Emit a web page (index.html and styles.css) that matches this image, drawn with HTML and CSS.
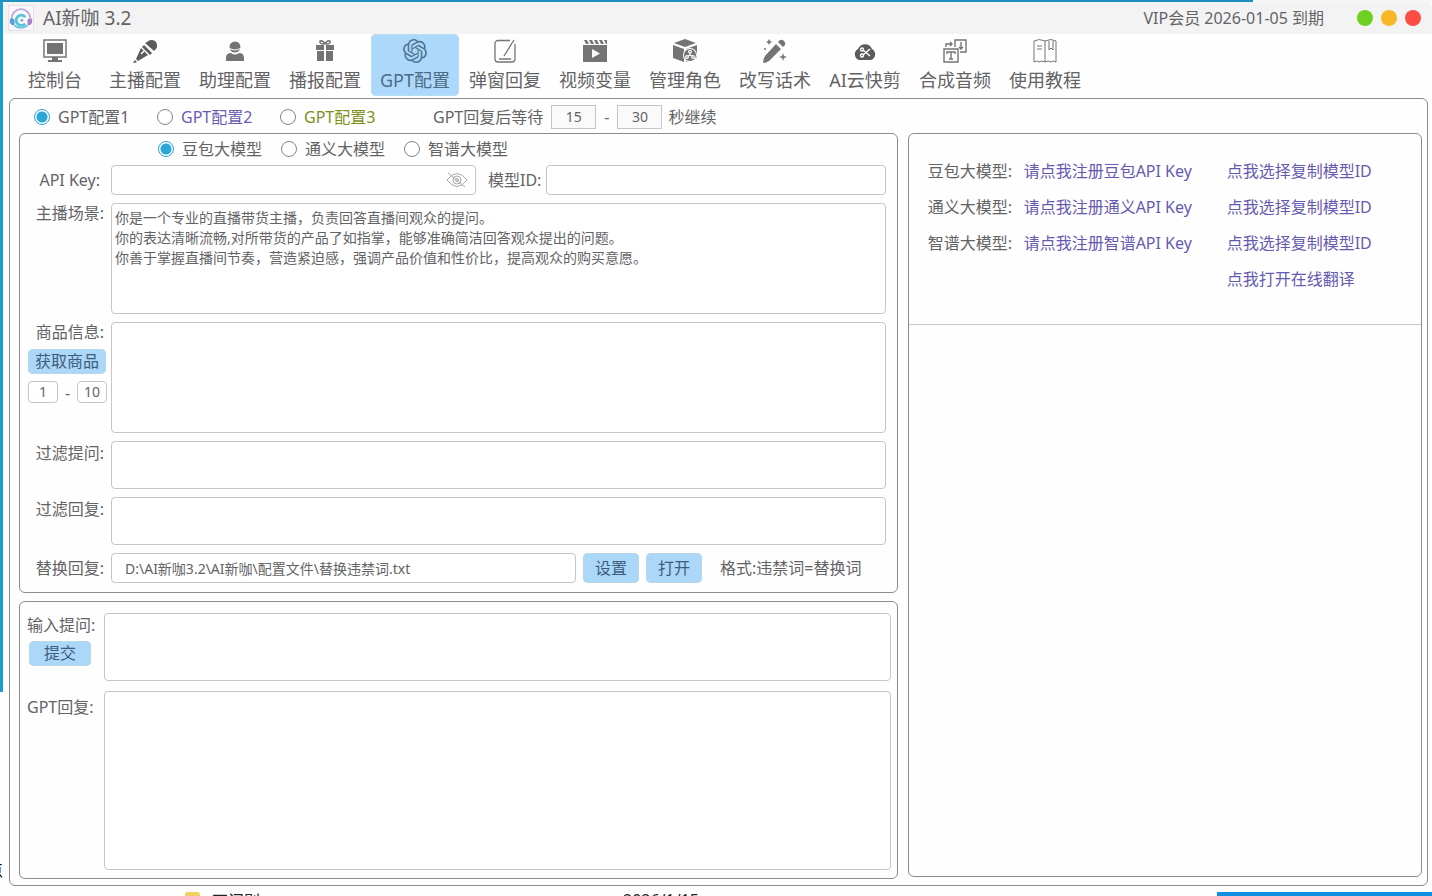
FILE: index.html
```html
<!DOCTYPE html>
<html lang="zh-CN">
<head>
    <meta charset="UTF-8">
    <meta name="viewport" content="width=device-width, initial-scale=1.0">
    <title>AI新咖 3.2</title>
    <link rel="stylesheet" href="styles.css">
</head>
<body>
<div class="desktop">
    <div class="desktop-top"></div>
    <div class="desktop-left"><span>点</span></div>
    <div class="window">
        <header class="titlebar">
            <svg class="logo" viewBox="0 0 28 28">
                <rect x="0.5" y="0.5" width="27" height="27" fill="#fbf7fa" stroke="#e6dfe4"/>
                <path d="M4 15a10 10 0 0 1 20-1" fill="none" stroke="#b9a8d8" stroke-width="2"/>
                <path d="M2 15q3-2 5 1v6q-6 0-5-7z" fill="#5f9bd4"/>
                <path d="M26 15q-3-2-5 1v6q6 0 5-7z" fill="#a583cc"/>
                <path d="M18.500 13a5.500 5.500 0 1 0 0 7" fill="none" stroke="#52c4da" stroke-width="3"/>
                <circle cx="15" cy="16.500" r="1.500" fill="#52b6da"/>
                <path d="M7 22q7 5 14 0" fill="none" stroke="#6fc4da" stroke-width="2"/>
            </svg>
            <h1>AI新咖 3.2</h1>
            <span class="vip">VIP会员 2026-01-05 到期</span>
            <div class="window-buttons">
                <button type="button" class="dot green" aria-label="最小化"></button>
                <button type="button" class="dot yellow" aria-label="最大化"></button>
                <button type="button" class="dot red" aria-label="关闭"></button>
            </div>
        </header>

        <nav class="toolbar">
            <button type="button" class="tool">
                <svg viewBox="0 0 24 24"><path d="M1 1h22v17H1z" fill="none" stroke="currentColor" stroke-width="1.500"/><path d="M4 4h16v11H4zM9 18h6v3H9zM5 21h14v2H5z"/></svg>
                控制台
            </button>
            <button type="button" class="tool dark">
                <svg viewBox="0 0 24 24"><path d="M14 3a6 6 0 0 1 8-1 6 6 0 0 1 1 8l-2 2-9-8zM11 6l8 8-2 2-8-8zM8 9l7 7-10 6-2-2zM2 21l2 2-3 1H0z"/><path d="M8 15l3-3" stroke="#fff" stroke-width="1.500"/></svg>
                主播配置
            </button>
            <button type="button" class="tool">
                <svg viewBox="0 0 24 24"><circle cx="12" cy="8" r="5.500"/><path d="M3 22v-3q0-5 5-5 4 3 8 0 5 0 5 5v3z"/><path d="M6 9q6 4 12 0" fill="none" stroke="#fff"/></svg>
                助理配置
            </button>
            <button type="button" class="tool">
                <svg viewBox="0 0 24 24"><path d="M3 6h8v5H3zM13 6h8v5h-8zM4 12h7v10H4zM13 12h7v10h-7z"/><path d="M11 5Q6 5 7 2q3-1 5 3 2-4 5-3 1 3-4 3" fill="none" stroke="currentColor" stroke-width="1.500"/></svg>
                播报配置
            </button>
            <button type="button" class="tool active">
                <svg viewBox="0 0 24 24"><path d="M22.2819 9.8211a5.9847 5.9847 0 0 0-.5157-4.9108 6.0462 6.0462 0 0 0-6.5098-2.9A6.0651 6.0651 0 0 0 4.9807 4.1818a5.9847 5.9847 0 0 0-3.9977 2.9 6.0462 6.0462 0 0 0 .7427 7.0966 5.98 5.98 0 0 0 .511 4.9107 6.051 6.051 0 0 0 6.5146 2.9001A5.9847 5.9847 0 0 0 13.2599 24a6.0557 6.0557 0 0 0 5.7718-4.2058 5.9894 5.9894 0 0 0 3.9977-2.9001 6.0557 6.0557 0 0 0-.7475-7.0729zm-9.022 12.6081a4.4755 4.4755 0 0 1-2.8764-1.0408l.1419-.0804 4.7783-2.7582a.7948.7948 0 0 0 .3927-.6813v-6.7369l2.02 1.1686a.071.071 0 0 1 .038.052v5.5826a4.504 4.504 0 0 1-4.4945 4.4944zm-9.6607-4.1254a4.4708 4.4708 0 0 1-.5346-3.0137l.142.0852 4.783 2.7582a.7712.7712 0 0 0 .7806 0l5.8428-3.3685v2.3324a.0804.0804 0 0 1-.0332.0615L9.74 19.9502a4.4992 4.4992 0 0 1-6.1408-1.6464zM2.3408 7.8956a4.485 4.485 0 0 1 2.3655-1.9728V11.6a.7664.7664 0 0 0 .3879.6765l5.8144 3.3543-2.0201 1.1685a.0757.0757 0 0 1-.071 0l-4.8303-2.7865A4.504 4.504 0 0 1 2.3408 7.872zm16.5963 3.8558L13.1038 8.364 15.1192 7.2a.0757.0757 0 0 1 .071 0l4.8303 2.7913a4.4944 4.4944 0 0 1-.6765 8.1042v-5.6772a.79.79 0 0 0-.407-.667zm2.0107-3.0231l-.142-.0852-4.7735-2.7818a.7759.7759 0 0 0-.7854 0L9.409 9.2297V6.8974a.0662.0662 0 0 1 .0284-.0615l4.8303-2.7866a4.4992 4.4992 0 0 1 6.6802 4.66zM8.3065 12.863l-2.02-1.1638a.0804.0804 0 0 1-.038-.0567V6.0742a4.4992 4.4992 0 0 1 7.3757-3.4537l-.142.0805L8.704 5.459a.7948.7948 0 0 0-.3927.6813zm1.0976-2.3654l2.602-1.4998 2.6069 1.4998v2.9994l-2.5974 1.4997-2.6067-1.4997Z"/></svg>
                GPT配置
            </button>
            <button type="button" class="tool">
                <svg viewBox="0 0 24 24" class="line"><path d="M17 1.500H5a3 3 0 0 0-3 3V20a3 3 0 0 0 3 3h14a3 3 0 0 0 3-3V5M6 20h12M21 1L11 17" stroke-width="1.300"/></svg>
                弹窗回复
            </button>
            <button type="button" class="tool">
                <svg viewBox="0 0 24 24"><path d="M0 6h24v17H0zM1 1h3l2 4H3zM6 1h3l2 4H8zM11 1h3l2 4h-3zM16 1h3l2 4h-3zM21 1h3v4h-1z"/><path d="M9 10v9l8-4.500z" fill="#fff"/></svg>
                视频变量
            </button>
            <button type="button" class="tool">
                <svg viewBox="0 0 24 24"><path d="M12 0l11 4-11 4L1 4zM0 6l11 4v13L0 19zM13 10l11-4v13l-11 4z"/><circle cx="17" cy="16" r="7" fill="#fff"/><circle cx="17" cy="16" r="6"/><g fill="none" stroke="#fff" stroke-width="1.200"><path d="M17 14v2l-2 1M17 16l2 1"/><circle cx="17" cy="12.700" r="1.300"/><circle cx="14" cy="18" r="1.300"/><circle cx="20" cy="18" r="1.300"/></g></svg>
                管理角色
            </button>
            <button type="button" class="tool">
                <svg viewBox="0 0 24 24"><path d="M13 5l5 5L6 22q-3 2-6 2 0-4 2-7zM15 3l2-2q2-1 4 1t1 4l-2 2zM6 0l1 2 2 1-2 1-1 2-1-2-2-1 2-1zM20 14l1 3 3 1-3 1-1 3-1-3-3-1 3-1z"/><circle cx="2" cy="10" r="1"/></svg>
                改写话术
            </button>
            <button type="button" class="tool dark">
                <svg viewBox="0 0 24 24"><path d="M6 21a6 6 0 0 1-1-11 7.500 7.500 0 0 1 14 0 6 6 0 0 1-1 11z"/><g fill="none" stroke="#fff" stroke-width="1.400"><path d="M10 11l7 6M10 16l7-6"/><circle cx="9" cy="10.500" r="1.500"/><circle cx="9" cy="16.500" r="1.500"/></g></svg>
                AI云快剪
            </button>
            <button type="button" class="tool">
                <svg viewBox="0 0 24 24" class="line"><path d="M1 10h14v13H1zM12 8V1h11v12h-6M4 15v-2h8v2M8 13v7M6 20h4M3 8V5h6M7 3l2 2-2 2M18 3v7M16 8l2 2 2-2" stroke-width="1.400"/></svg>
                合成音频
            </button>
            <button type="button" class="tool">
                <svg viewBox="0 0 24 24" class="line"><path d="M1 2q5-3 11 0 6-3 11 0v21q-3-2-5 0-3-2-6 0-3-2-6 0-2-2-5 0zM12 2v21M4 7h5M4 10h5M16 2v9l2-2 2 2V2"/></svg>
                使用教程
            </button>
        </nav>

        <main class="panel">
            <div class="config-row">
                <label class="radio"><input type="radio" name="config" checked>GPT配置1</label>
                <label class="radio purple"><input type="radio" name="config">GPT配置2</label>
                <label class="radio olive"><input type="radio" name="config">GPT配置3</label>
                <div class="wait">
                    <label for="wait-min">GPT回复后等待</label>
                    <input type="text" id="wait-min" value="15">
                    <span>-</span>
                    <input type="text" id="wait-max" value="30" aria-label="最长等待">
                    <label for="wait-max">秒继续</label>
                </div>
            </div>

            <div class="columns">
                <div class="left">
                    <form class="box settings">
                        <div class="model-row">
                            <label class="radio"><input type="radio" name="model" checked>豆包大模型</label>
                            <label class="radio"><input type="radio" name="model">通义大模型</label>
                            <label class="radio"><input type="radio" name="model">智谱大模型</label>
                        </div>
                        <div class="row">
                            <label class="name middle key-name" for="api-key">API Key:</label>
                            <div class="api-fields">
                                <div class="key-field">
                                    <input type="password" id="api-key">
                                    <button type="button" class="eye" aria-label="显示">
                                        <svg viewBox="0 0 22 16" class="line"><path d="M1 8q10-13 20 0-10 13-20 0zM2 1l17 14"/><circle cx="11" cy="8" r="4"/><circle cx="11" cy="8" r="1.500"/></svg>
                                    </button>
                                </div>
                                <label for="model-id">模型ID:</label>
                                <input type="text" id="model-id">
                            </div>
                        </div>
                        <div class="row">
                            <label class="name" for="scene">主播场景:</label>
                            <textarea id="scene" class="tall">你是一个专业的直播带货主播，负责回答直播间观众的提问。
你的表达清晰流畅,对所带货的产品了如指掌，能够准确简洁回答观众提出的问题。
你善于掌握直播间节奏，营造紧迫感，强调产品价值和性价比，提高观众的购买意愿。</textarea>
                        </div>
                        <div class="row">
                            <div class="goods">
                                <label class="name" for="goods">商品信息:</label>
                                <button type="button" class="btn small">获取商品</button>
                                <div class="range">
                                    <input type="text" value="1" aria-label="起始商品">
                                    <span>-</span>
                                    <input type="text" value="10" aria-label="结束商品">
                                </div>
                            </div>
                            <textarea id="goods" class="tall"></textarea>
                        </div>
                        <div class="row">
                            <label class="name filter-name" for="filter-ask">过滤提问:</label>
                            <textarea id="filter-ask" class="short"></textarea>
                        </div>
                        <div class="row">
                            <label class="name filter-name" for="filter-reply">过滤回复:</label>
                            <textarea id="filter-reply" class="short"></textarea>
                        </div>
                        <div class="row">
                            <label class="name middle" for="replace">替换回复:</label>
                            <div class="replace-fields">
                                <input type="text" id="replace" value="D:\AI新咖3.2\AI新咖\配置文件\替换违禁词.txt">
                                <button type="button" class="btn">设置</button>
                                <button type="button" class="btn">打开</button>
                                <span class="hint">格式:违禁词=替换词</span>
                            </div>
                        </div>
                    </form>

                    <form class="box chat">
                        <div class="ask-side">
                            <label for="ask">输入提问:</label>
                            <button type="button" class="btn small submit">提交</button>
                        </div>
                        <textarea id="ask"></textarea>
                        <label class="reply-name" for="reply">GPT回复:</label>
                        <textarea id="reply"></textarea>
                    </form>
                </div>

                <aside class="box help">
                    <div class="links">
                        <span>豆包大模型:</span>
                        <a href="#">请点我注册豆包API Key</a>
                        <a href="#">点我选择复制模型ID</a>
                        <span>通义大模型:</span>
                        <a href="#">请点我注册通义API Key</a>
                        <a href="#">点我选择复制模型ID</a>
                        <span>智谱大模型:</span>
                        <a href="#">请点我注册智谱API Key</a>
                        <a href="#">点我选择复制模型ID</a>
                        <a href="#" class="last">点我打开在线翻译</a>
                    </div>
                </aside>
            </div>
        </main>
    </div>
    <footer class="desktop-bottom">
        <i class="folder"></i>
        <span class="file-name">不问别</span>
        <span class="file-date">2026/1/15</span>
        <i class="taskbar"></i>
    </footer>
</div>
</body>
</html>
```
FILE: styles.css
```css
* {
    box-sizing: border-box;
}

body {
    margin: 0;
    font-family: "Noto Sans", "Noto Sans CJK SC", sans-serif;
    font-size: 16px;
    font-weight: 400;
    line-height: 24px;
    color: #636366;
    background-color: #ffffff;
}

input,
textarea,
button {
    font: inherit;
    color: inherit;
    margin: 0;
}

button {
    padding: 0;
    border: none;
    background: none;
    cursor: pointer;
}

svg {
    fill: currentColor;
    flex-shrink: 0;
}

.line {
    fill: none;
    stroke: currentColor;
}

/* Desktop behind the window */
.desktop {
    display: grid;
    grid-template-columns: 3px minmax(0, 1fr);
    grid-template-rows: 2px minmax(0, 1fr) 4px;
    min-height: 100vh;
}

.desktop-top {
    grid-column: 1 / 3;
    background: linear-gradient(to right, #1f8fbe 87.5%, #f4f6f8 87.5%);
}

.desktop-left {
    display: flex;
    align-items: flex-end;
    justify-content: flex-end;
    overflow: hidden;
    padding-bottom: 10px;
    color: #000000;
    background: linear-gradient(#1c9dcf 77.5%, #ffffff 77.5%);
}

.desktop-bottom {
    grid-column: 1 / 3;
    display: flex;
    height: 4px;
    overflow: hidden;
    padding-left: 185px;
    background-color: #ffffff;
    color: #222222;
}

.folder {
    width: 15px;
    margin-right: 12px;
    background-color: #f3cf62;
    border-radius: 3px 3px 0 0;
}

.file-name {
    width: 411px;
    line-height: 18px;
}

.file-date {
    line-height: 16px;
}

.taskbar {
    width: 15vw;
    margin-left: auto;
    background-color: #0f8fe0;
}

/* Window */
.window {
    display: flex;
    flex-direction: column;
    background-color: #fefefe;
    border-radius: 5px 5px 0 0;
    overflow: hidden;
}

.titlebar {
    display: flex;
    align-items: center;
    height: 32px;
    padding: 0 11px 0 5px;
    background-color: #f3f3f4;
}

.logo {
    width: 26px;
    height: 26px;
}

h1 {
    margin: 0 auto 0 9px;
    font-size: 19px;
    font-weight: 400;
}

.vip {
    margin-right: 33px;
}

.window-buttons {
    display: flex;
    gap: 8px;
}

.dot {
    width: 16px;
    height: 16px;
    border-radius: 50%;
}

.green {
    background-color: #6fd11f;
}

.yellow {
    background-color: #f8b826;
}

.red {
    background-color: #fb4d43;
}

.toolbar {
    display: flex;
    gap: 2px;
    padding: 0 8px 2px;
}

.tool {
    display: flex;
    flex-direction: column;
    align-items: center;
    gap: 5px;
    width: 88px;
    height: 62px;
    padding-top: 5px;
    border-radius: 5px;
    font-size: 18px;
    white-space: nowrap;
}

.tool svg {
    width: 24px;
    height: 24px;
    color: #747474;
}

.tool.dark svg {
    color: #5c5c5c;
}

.tool.active {
    background-color: #acd9fb;
    box-shadow: inset 0 0 0 1px #b9ddf0;
    color: #4f6c85;
}

.tool.active svg {
    color: #527590;
}

.panel {
    flex: 1;
    display: flex;
    flex-direction: column;
    margin: 0 4px 6px 6px;
    padding: 0 5px 6px 9px;
    border: 1px solid #8b8b8b;
    border-radius: 6px;
}

.config-row {
    display: flex;
    align-items: center;
    height: 34px;
    padding: 1px 0 0 15px;
}

.radio {
    display: flex;
    align-items: center;
    gap: 8px;
    width: 123px;
}

.radio input {
    appearance: none;
    width: 16px;
    height: 16px;
    border: 1px solid #858585;
    border-radius: 50%;
    background-color: #ffffff;
}

.radio input:checked {
    border-color: #2ba6d8;
    background: radial-gradient(#2ba6d8 0 5px, #ffffff 6px);
}

.purple {
    color: #6a5cb4;
}

.olive {
    color: #7f8f1c;
}

.wait {
    display: flex;
    align-items: center;
    gap: 8px;
    margin-left: 30px;
}

.wait label {
    margin: 0 -2px;
}

.wait label:first-child {
    margin: 0;
}

.wait input {
    width: 45px;
    height: 24px;
    border: 1px solid #c6c6c6;
    background-color: #fafafa;
    font-size: 14px;
    text-align: center;
}

.columns {
    flex: 1;
    display: grid;
    grid-template-columns: minmax(0, 878fr) minmax(0, 514fr);
    gap: 10px;
}

.left {
    display: flex;
    flex-direction: column;
    gap: 8px;
}

.box {
    border: 1px solid #8b8b8b;
    border-radius: 6px;
}

.box textarea,
.api-fields input,
.replace-fields input,
.range input {
    border: 1px solid #c6c6c6;
    border-radius: 4px;
    background-color: #ffffff;
}

.box textarea {
    display: block;
    width: 100%;
    padding: 4px 3px;
    font-size: 14px;
    line-height: 20px;
    resize: none;
}

.settings {
    display: flex;
    flex-direction: column;
    gap: 8px;
    padding: 5px 11px 9px 8px;
}

.model-row {
    display: flex;
    height: 18px;
    padding-left: 130px;
}

.model-row .radio {
    height: 20px;
}

.row {
    display: grid;
    grid-template-columns: 76px minmax(0, 1fr);
    column-gap: 7px;
}

.name {
    justify-self: end;
    line-height: 20px;
    white-space: nowrap;
}

.key-name {
    margin-right: 4px;
}

.filter-name {
    padding-top: 2px;
}

.middle {
    align-self: center;
}

.tall {
    height: 111px;
}

.short {
    height: 48px;
}

.api-fields {
    display: flex;
    align-items: center;
    white-space: nowrap;
}

.api-fields input {
    width: 100%;
    height: 30px;
}

.api-fields > label {
    margin: 0 5px 0 12px;
}

.api-fields > input {
    flex: 336;
    min-width: 0;
}

.key-field {
    position: relative;
    flex: 368;
}

.key-field input {
    display: block;
    padding-right: 32px;
}

.eye {
    position: absolute;
    top: 7px;
    right: 8px;
    width: 22px;
    height: 16px;
    color: #a9a9a9;
}

.eye svg {
    display: block;
}

.goods {
    display: flex;
    flex-direction: column;
}

.goods .name {
    align-self: flex-end;
}

.btn {
    width: 56px;
    height: 30px;
    border-radius: 5px;
    background-color: #abd7f8;
    box-shadow: inset 0 0 0 1px #b8d8ea;
    color: #3f5d78;
}

.btn.small {
    width: 78px;
    height: 25px;
    line-height: 25px;
}

.goods .small {
    margin-top: 7px;
}

.range {
    display: flex;
    justify-content: space-between;
    width: 79px;
    margin-top: 7px;
}

.range input {
    width: 30px;
    height: 22px;
    padding: 0;
    font-size: 14px;
    text-align: center;
}

.replace-fields {
    display: flex;
    align-items: center;
    gap: 7px;
}

.replace-fields input {
    flex: 1;
    max-width: 465px;
    height: 30px;
    padding: 0 13px;
    font-size: 14px;
}

.hint {
    margin-left: 11px;
    white-space: nowrap;
}

.chat {
    flex: 1;
    display: grid;
    grid-template-columns: 70px minmax(0, 1fr);
    grid-template-rows: 68px minmax(0, 1fr);
    row-gap: 10px;
    column-gap: 7px;
    padding: 11px 6px 8px 7px;
}

.box.chat textarea {
    height: 100%;
}

.btn.submit {
    width: 62px;
    margin: 4px 0 0 2px;
}

.reply-name {
    padding-top: 4px;
}

.help {
    margin-bottom: 2px;
}

.links {
    display: grid;
    grid-template-columns: 96px 203px minmax(0, 1fr);
    grid-auto-rows: 36px;
    align-items: center;
    height: 191px;
    padding: 19px 0 0 19px;
    border-bottom: 1px solid #c8c8c8;
    white-space: nowrap;
}

.links a {
    color: #665ab0;
    text-decoration: none;
}

.links .last {
    grid-column: 3;
}
```
